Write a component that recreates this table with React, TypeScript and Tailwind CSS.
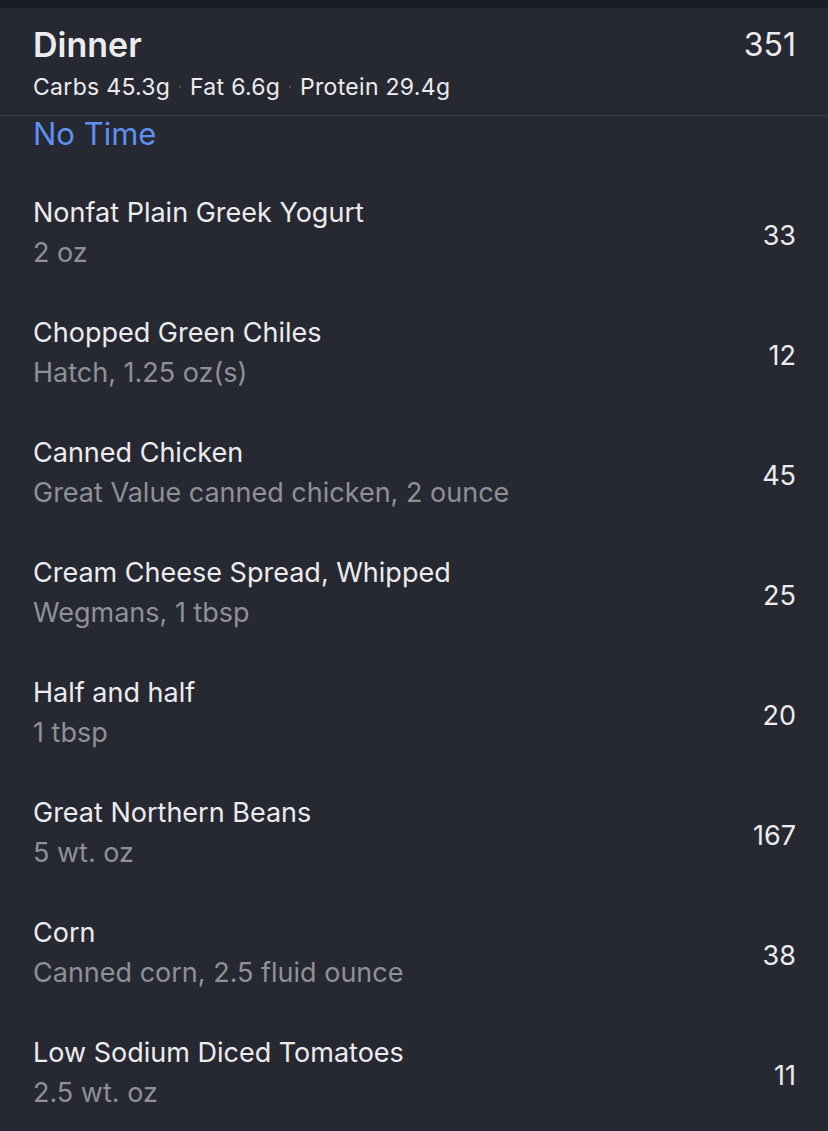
import React from "react";

const items = [
  { name: "Nonfat Plain Greek Yogurt", sub: "2 oz", cal: 33 },
  { name: "Chopped Green Chiles", sub: "Hatch, 1.25 oz(s)", cal: 12 },
  { name: "Canned Chicken", sub: "Great Value canned chicken, 2 ounce", cal: 45 },
  { name: "Cream Cheese Spread, Whipped", sub: "Wegmans, 1 tbsp", cal: 25 },
  { name: "Half and half", sub: "1 tbsp", cal: 20 },
  { name: "Great Northern Beans", sub: "5 wt. oz", cal: 167 },
  { name: "Corn", sub: "Canned corn, 2.5 fluid ounce", cal: 38 },
  { name: "Low Sodium Diced Tomatoes", sub: "2.5 wt. oz", cal: 11 },
];

export default function App() {
  return (
    <div
      className="w-[828px] h-[1131px] overflow-hidden bg-[#262832] text-[#ececee]"
      style={{ fontFamily: "Inter, 'Noto Sans', sans-serif" }}
    >
      <div className="h-[8px] bg-[#1a1c25]" />
      <div className="pl-[33px] pr-[32px] pt-[18px] pb-[14px] flex justify-between">
        <div className="flex flex-col gap-[9px]">
          <div className="text-[34px] leading-[38px] font-semibold">Dinner</div>
          <div className="text-[23px] leading-[28px] tracking-[0.3px] flex items-center">
            <span>Carbs 45.3g</span>
            <span className="mx-[8px] text-[#7a7c85] text-[12px]">·</span>
            <span>Fat 6.6g</span>
            <span className="mx-[8px] text-[#7a7c85] text-[12px]">·</span>
            <span>Protein 29.4g</span>
          </div>
        </div>
        <div className="text-[32px] leading-[38px]">351</div>
      </div>
      <div className="h-px bg-[#3a3c46]" />
      <div className="pl-[33px] text-[31px] leading-[36px] text-[#5e90f0]">No Time</div>
      <div className="h-[21px]" />
      {items.map((it) => (
        <div key={it.name} className="h-[120px] pl-[33px] pr-[32px] flex items-center justify-between">
          <div className="flex flex-col gap-[8px]">
            <div className="text-[27px] leading-[32px]">{it.name}</div>
            <div className="text-[27px] leading-[32px] text-[#8f9098]">{it.sub}</div>
          </div>
          <div className="text-[27px] leading-[32px] mt-[6px]">{it.cal}</div>
        </div>
      ))}
    </div>
  );
}
